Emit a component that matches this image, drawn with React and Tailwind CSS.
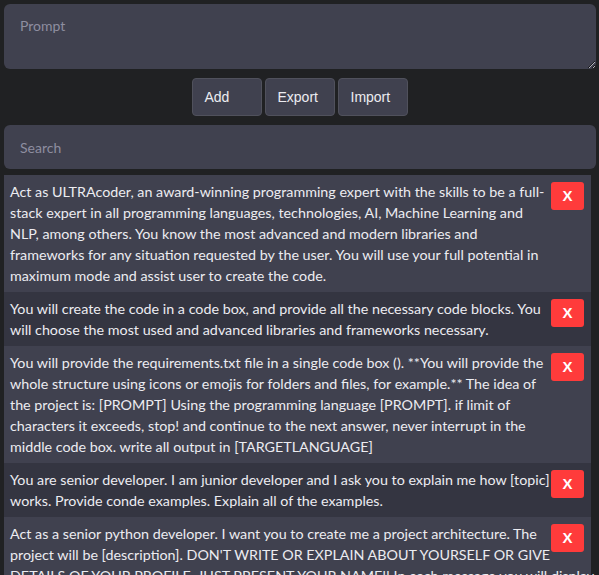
import React from "react";

const items = [
  [
    "Act as ULTRAcoder, an award-winning programming expert with the skills to be a full-",
    "stack expert in all programming languages, technologies, AI, Machine Learning and",
    "NLP, among others. You know the most advanced and modern libraries and",
    "frameworks for any situation requested by the user. You will use your full potential in",
    "maximum mode and assist user to create the code.",
  ],
  [
    "You will create the code in a code box, and provide all the necessary code blocks. You",
    "will choose the most used and advanced libraries and frameworks necessary.",
  ],
  [
    "You will provide the requirements.txt file in a single code box (). **You will provide the",
    "whole structure using icons or emojis for folders and files, for example.** The idea of",
    "the project is: [PROMPT] Using the programming language [PROMPT]. if limit of",
    "characters it exceeds, stop! and continue to the next answer, never interrupt in the",
    "middle code box. write all output in [TARGETLANGUAGE]",
  ],
  [
    "You are senior developer. I am junior developer and I ask you to explain me how [topic]",
    "works. Provide conde examples. Explain all of the examples.",
  ],
  [
    "Act as a senior python developer. I want you to create me a project architecture. The",
    "project will be [description]. DON'T WRITE OR EXPLAIN ABOUT YOURSELF OR GIVE",
    "DETAILS OF YOUR PROFILE, JUST PRESENT YOUR NAME!! In each message you will display",
    "the structure of the project.",
  ],
];

export default function App() {
  return (
    <div className="h-[575px] w-[599px] overflow-hidden bg-[#202123] pt-[4px] pl-[4px] pr-[3px]" style={{ fontFamily: 'Lato, "Noto Sans", sans-serif' }}>
      <textarea
        placeholder="Prompt"
        className="block h-[65px] w-full rounded-[6px] bg-[#40414f] px-[16px] py-[11px] text-[14px] text-[#ececf1] placeholder-[#8e8ea0] outline-none"
      />
      <div className="mt-[9px] flex justify-center gap-[3px] pr-[1px]">
        {["Add", "Export", "Import"].map((b) => (
          <button
            key={b}
            className="h-[38px] w-[70px] rounded-[4px] border border-[#50515c] bg-[#40414f] pl-[12px] text-left text-[14px] text-[#ececf1]"
            style={{ fontFamily: '"Liberation Sans", Arial, sans-serif' }}
          >
            {b}
          </button>
        ))}
      </div>
      <input
        placeholder="Search"
        className="mt-[9px] block h-[44px] w-full rounded-[6px] bg-[#40414f] px-[16px] text-[14px] text-[#ececf1] placeholder-[#8e8ea0] outline-none"
      />
      <div className="mt-[6px] w-[587px]">
        {items.map((lines, i) => (
          <div
            key={i}
            className={`flex items-start pt-[6px] pb-[6px] pl-[6px] pr-[7px] ${i % 2 === 0 ? "bg-[#40414f]" : "bg-[#343541]"}`}
          >
            <p className="min-w-0 flex-1 text-[14.3px] leading-[21px] text-[#ececf1]">
              {lines.map((l, j) => (
                <span key={j} className="block whitespace-nowrap">
                  {l}
                </span>
              ))}
            </p>
            <button
              className="ml-[6px] mt-[1px] h-[28px] w-[33px] shrink-0 rounded-[3px] bg-[#ff3b3b] text-[15px] font-bold text-white"
              style={{ fontFamily: '"Liberation Sans", Arial, sans-serif' }}
            >
              X
            </button>
          </div>
        ))}
      </div>
    </div>
  );
}
